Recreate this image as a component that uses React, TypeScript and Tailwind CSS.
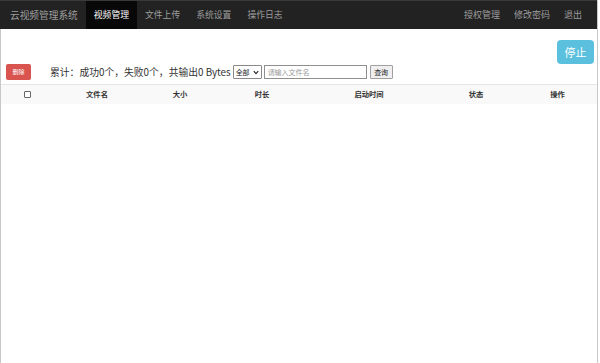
import React from "react"

const cjk = { fontFamily: '"Microsoft YaHei", "Noto Sans CJK SC", "Liberation Sans", sans-serif' }

function Navbar() {
  const left = ["视频管理", "文件上传", "系统设置", "操作日志"]
  const right = ["授权管理", "修改密码", "退出"]
  return (
    <div className="flex h-[29px] items-stretch bg-[#222222] border-t border-[#3a3a3a] text-[#9d9d9d]">
      <div className="flex items-center pl-[10px] pr-[8px] text-[9.7px]">云视频管理系统</div>
      <div className="flex items-stretch text-[8.8px]">
        {left.map((t, i) => (
          <div
            key={t}
            className={
              i === 0
                ? "flex items-center px-[8px] bg-[#080808] text-white"
                : "flex items-center px-[8px]"
            }
          >
            {t}
          </div>
        ))}
      </div>
      <div className="ml-auto flex items-stretch pr-[8px] text-[9px]">
        {right.map((t) => (
          <div key={t} className="flex items-center px-[7px]">
            {t}
          </div>
        ))}
      </div>
    </div>
  )
}

function Toolbar() {
  return (
    <div className="flex items-center h-[16px] pl-[5px]">
      <button className="h-[16px] w-[25px] rounded-[2px] bg-[#d9534f] text-white text-[6px] leading-none">
        删除
      </button>
      <span className="ml-[19px] text-[9.8px] text-[#333]">累计：成功0个，失败0个，共输出0 Bytes</span>
      <div className="ml-[2px] flex h-[14px] w-[29px] items-center justify-between border border-[#888] rounded-[1px] bg-white px-[2px] text-[7px] text-[#222]">
        <span>全部</span>
        <svg width="6" height="5" viewBox="0 0 6 5">
          <path d="M0.8 1.2 L3 3.6 L5.2 1.2" fill="none" stroke="#222" strokeWidth="1.1" />
        </svg>
      </div>
      <div className="ml-[2px] flex h-[14px] w-[103px] items-center border border-[#8f8f8f] bg-white px-[3px] text-[7px] text-[#9a9a9a]">
        请输入文件名
      </div>
      <div className="ml-[3px] flex h-[14px] w-[23px] items-center justify-center border border-[#a0a0a0] rounded-[1px] bg-[#efefef] text-[7px] text-[#222]">
        查询
      </div>
    </div>
  )
}

function TableHead() {
  const cols: [string, string][] = [
    ["", "w-[53px]"],
    ["文件名", "w-[86px]"],
    ["大小", "w-[80px]"],
    ["时长", "w-[84px]"],
    ["启动时间", "w-[130px]"],
    ["状态", "w-[84px]"],
    ["操作", "flex-1"],
  ]
  return (
    <div className="mt-[4px] flex h-[20px] border-t border-[#e6e6e6] bg-[#f9f9f9] text-[7.3px] font-bold text-[#333]">
      {cols.map(([t, w], i) => (
        <div key={i} className={`${w} flex items-center justify-center`}>
          {i === 0 ? (
            <span className="block h-[7px] w-[7px] rounded-[1px] border border-[#666] bg-white" />
          ) : (
            t
          )}
        </div>
      ))}
    </div>
  )
}

export default function App() {
  return (
    <div className="h-[363px] w-[600px] overflow-hidden bg-white" style={cjk}>
      <div className="flex h-full w-[598px] flex-col border-r border-[#c8c8c8]">
        <Navbar />
        <div className="flex flex-1 flex-col border-l border-[#c8c8c8]">
          <div className="flex justify-end pt-[11px] pr-[3px]">
            <button className="h-[24px] w-[37px] rounded-[4px] bg-[#5bc0de] text-[11px] text-white">停止</button>
          </div>
          <Toolbar />
          <TableHead />
        </div>
      </div>
    </div>
  )
}
